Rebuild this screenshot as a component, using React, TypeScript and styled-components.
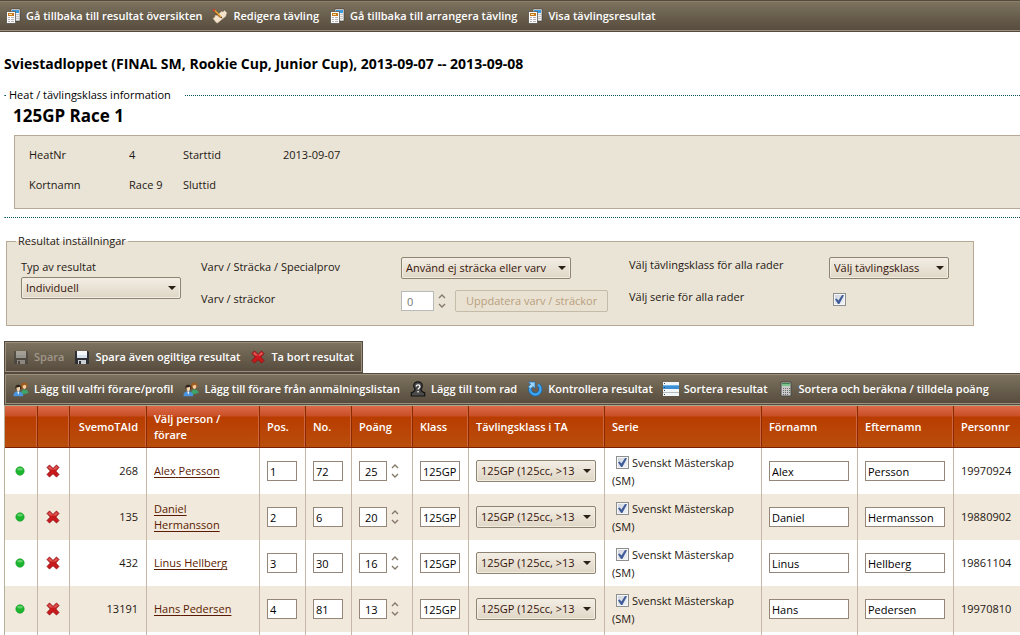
import React from "react";
import styled, { createGlobalStyle, css } from "styled-components";

const GlobalStyle = createGlobalStyle`
  *, *::before, *::after { box-sizing: border-box; }
  body {
    margin: 0;
    background: #fff;
    color: #1e1812;
    font-family: "Segoe UI", "Open Sans", "Noto Sans", sans-serif;
    font-size: 11px;
    line-height: 16px;
  }
  input, select, button { font: inherit; color: inherit; margin: 0; }
`;

const Page = styled.main`
  overflow: hidden;
`;

/* ---------- toolbars ---------- */

const Toolbar = styled.div<{ $compact?: boolean }>`
  display: flex;
  align-items: center;
  height: 32px;
  gap: 10px;
  padding: 0 8px;
  background: linear-gradient(#7d735f, #564b3d);
  border: 1px solid #544a3d;
  box-shadow: inset 0 0 0 1px #9a907d;
  ${(p) => p.$compact && css`width: max-content;`}
`;

const TopToolbar = styled(Toolbar)`
  padding: 0 5px;
  border-width: 1px 0;
  box-shadow: inset 0 -1px 0 #9a907d, inset 0 1px 0 #8b806c;
`;

const ToolButton = styled.button`
  display: flex;
  align-items: center;
  gap: 5px;
  padding: 0;
  border: 0;
  background: none;
  color: #fff;
  font-weight: 600;
  white-space: nowrap;
  &:disabled { color: #a0978a; }
  &:disabled svg { opacity: 0.4; }
`;

const ToolLink = styled.a`
  display: flex;
  align-items: center;
  gap: 5px;
  color: #fff;
  font-weight: 600;
  white-space: nowrap;
  text-decoration: none;
`;

/* ---------- heat information ---------- */

const Title = styled.h1`
  margin: 23px 4px 14px;
  font-size: 14px;
  line-height: 18px;
  font-weight: 700;
  color: #000;
`;

const HeatInfo = styled.fieldset`
  min-width: 0;
  margin: 0 0 0 4px;
  padding: 0 0 8px;
  border: 1px dotted #005060;
  border-width: 1px 0 1px 1px;
  border-left-color: transparent;
  legend {
    margin-left: 2px;
    padding: 0 14px 0 2px;
    color: #000;
  }
`;

const HeatTitle = styled.h2`
  margin: 0 0 6px 8px;
  font-size: 17px;
  line-height: 26px;
  font-weight: 700;
  color: #000;
`;

const InfoBox = styled.dl`
  display: grid;
  grid-template-columns: 100px 54px 100px 1fr;
  row-gap: 14px;
  margin: 0 0 0 9px;
  padding: 11px 14px 15px;
  border: 1px solid #b8a996;
  border-right: 0;
  background: #eae4d7;
  dt, dd { margin: 0; }
`;

/* ---------- result settings ---------- */

const Settings = styled.fieldset`
  display: grid;
  grid-template-columns: 180px 200px 228px 200px 1fr;
  margin: 15px 46px 15px 6px;
  padding: 8px 14px 13px;
  border: 1px solid #b8a996;
  background: #eae4d7;
  legend {
    margin-left: -5px;
    padding: 0 2px;
  }
`;

const SettingsColumn = styled.div<{ $gap?: number; $top?: number }>`
  display: flex;
  flex-direction: column;
  align-items: flex-start;
  gap: ${(p) => p.$gap ?? 0}px;
  padding-top: ${(p) => p.$top ?? 0}px;
  white-space: nowrap;
`;

const Inline = styled.div`
  display: flex;
  align-items: center;
`;

const UpdateButton = styled.button`
  height: 22px;
  margin-left: 9px;
  padding: 0 10px;
  border: 1px solid #c5bba9;
  border-radius: 2px;
  background: #e9e2d3;
  &:disabled { color: #b8a07c; }
`;

/* ---------- form parts ---------- */

const SelectFrame = styled.span<{ $width: number }>`
  position: relative;
  display: block;
  width: ${(p) => p.$width}px;
  height: 22px;
  svg {
    position: absolute;
    top: 9px;
    right: 5px;
    pointer-events: none;
  }
`;

const Select = styled.select`
  appearance: none;
  display: block;
  width: 100%;
  height: 22px;
  padding: 0 20px 0 4px;
  border: 1px solid #8f8371;
  border-radius: 2px;
  background: linear-gradient(#f3eee5, #e9e2d5 50%, #dfd6c5);
  box-shadow: inset 0 0 0 1px #f3eee4;
  color: #35140a;
`;

const TextInput = styled.input<{ $width: number }>`
  display: block;
  width: ${(p) => p.$width}px;
  height: 20px;
  padding: 1px 2px 0;
  border: 1px solid #94877a;
  background: #fff;
  color: #000;
  &:disabled { border-color: #b9b9b9; color: #777; }
`;

const SpinnerFrame = styled.span`
  display: flex;
  align-items: center;
  gap: 4px;
  input { padding-left: 5px; }
`;

const SpinnerButtons = styled.span`
  display: flex;
  flex-direction: column;
  gap: 4px;
`;

const SpinnerButton = styled.button`
  display: flex;
  padding: 0;
  border: 0;
  background: none;
`;

const Checkbox = styled.input`
  appearance: none;
  position: relative;
  width: 13px;
  height: 13px;
  border: 1px solid #8e8f8f;
  background: linear-gradient(135deg, #ccd2dc, #f4f6f8);
  box-shadow: inset 0 0 0 1px #f6f6f6;
  vertical-align: -2px;
  &:checked::before {
    content: "";
    position: absolute;
    inset: 1px;
    background: #3f5c98;
    clip-path: polygon(0% 48%, 18% 40%, 38% 62%, 78% 0%, 100% 4%, 48% 100%, 34% 100%);
  }
`;

function DropDown({ label, value, width }: { label: string; value: string; width: number }) {
  return (
    <SelectFrame $width={width}>
      <Select aria-label={label} defaultValue={value}>
        <option>{value}</option>
      </Select>
      <svg width="8" height="4" viewBox="0 0 8 4" aria-hidden="true">
        <path d="M0 0h8L4 4z" fill="#2b2015" />
      </svg>
    </SelectFrame>
  );
}

function Spinner({ label, value, width, disabled }: { label: string; value: string; width: number; disabled?: boolean }) {
  return (
    <SpinnerFrame>
      <TextInput $width={width} aria-label={label} defaultValue={value} disabled={disabled} />
      <SpinnerButtons>
        <SpinnerButton type="button" aria-label="Öka" disabled={disabled}>
          <svg width="8" height="6" viewBox="0 0 8 6"><path d="M1 5l3-3 3 3" fill="none" stroke="#85796a" strokeWidth="1.4" /></svg>
        </SpinnerButton>
        <SpinnerButton type="button" aria-label="Minska" disabled={disabled}>
          <svg width="8" height="6" viewBox="0 0 8 6"><path d="M1 1l3 3 3-3" fill="none" stroke="#85796a" strokeWidth="1.4" /></svg>
        </SpinnerButton>
      </SpinnerButtons>
    </SpinnerFrame>
  );
}

/* ---------- icons ---------- */

const Icon = ({ children }: { children: React.ReactNode }) => (
  <svg width="16" height="16" viewBox="0 0 16 16" aria-hidden="true">{children}</svg>
);

const PagesIcon = () => (
  <Icon>
    <path d="M6 1h9v12H6z" fill="#f3f3f3" stroke="#3c3a36" strokeWidth=".6" />
    <path d="M7 2h7v3H7z" fill="#3b9be0" />
    <path d="M11 6h3v1h-3zM11 8h3v1h-3zM11 10h3v1h-3z" fill="#c4c4c4" />
    <path d="M1.500 3.500h9v12h-9z" fill="#fafafa" stroke="#45423c" strokeWidth=".7" />
    <path d="M3 5h6v3H3z" fill="#c77a1e" />
    <path d="M4 6h3v1H4z" fill="#fbe3a8" />
    <path d="M3 9h2v1H3zM6 9h3v1H6zM3 11h2v1H3zM6 11h3v1H6zM3 13h2v1H3zM6 13h3v1H6z" fill="#b4b4b4" />
  </Icon>
);

const EditIcon = () => (
  <Icon>
    <path d="M1 10.500L3 9l0-1.500L5 7.500 9.500 3.500 11 4l1.500-1.500L15 5l-1 1.500 0 1.500-8.500 7L4 14.500 3 13z" fill="#f3e3cd" stroke="#cdb292" strokeWidth=".5" />
    <path d="M2.400 1L9.600 8.400 8.400 9.600 1 2.400z" fill="#e2a52f" />
    <path d="M1.200 2.600L8.400 9.800" stroke="#7d3415" strokeWidth=".9" />
    <path d="M.600 1.600L1.800.500 3.400 2 2 3.400z" fill="#c8392f" />
    <path d="M8.400 9.600L9.600 8.400l.7 2z" fill="#3c2a1a" />
  </Icon>
);

const SaveIcon = () => (
  <Icon>
    <path d="M1 2h13l1 1v12H1z" fill="#2e3033" />
    <path d="M3 2h10v7H3z" fill="#f4f7fa" />
    <path d="M3 6h10v3H3z" fill="#d8e2ec" />
    <path d="M4 11h8v4H4z" fill="#c9ced4" />
    <path d="M5 12h2v3H5z" fill="#2e3033" />
  </Icon>
);

const CrossIcon = () => (
  <Icon>
    <path d="M2 4.500L4.500 2 8 5.400 11.500 2 14 4.500 10.800 8 14 11.500 11.500 14 8 10.700 4.500 14 2 11.500 5.300 8z" fill="#c9191c" stroke="#8e0d10" strokeWidth=".8" strokeLinejoin="round" />
    <path d="M3 4.500L4.600 3 8 6.300 11.500 3 13 4.500 11 6.600H5z" fill="#e8706a" opacity=".7" />
  </Icon>
);

const PeopleIcon = () => (
  <Icon>
    <path d="M8 14c0-4 1-5.500 3.500-5.500S15.500 10 15.500 12z" fill="#3fa267" />
    <circle cx="11.300" cy="4.600" r="3.100" fill="#9c5a1d" />
    <path d="M9.600 4.600c1.500 0 2-.6 2.400-1.100.4.800 1 1.200 1.300 1.300 0 2-.8 3.200-1.800 3.200s-1.900-1.400-1.900-3.400z" fill="#f6cfa4" />
    <path d="M8.400 3L7.600 7.500 9.400 8z" fill="#8a4c17" />
    <path d="M.500 15.200c0-3.200 1-4.700 4.500-4.700s5.200 1.500 5.200 4.700z" fill="#4a94dd" />
    <path d="M4.300 10.500h2l-1 3.500z" fill="#fff" />
    <circle cx="5.200" cy="6.500" r="2.800" fill="#2e2118" />
    <path d="M3.400 6.500c1.600 0 2.600-.4 3.600-.8.400 2.800-.5 4.600-1.700 4.600s-1.900-1.800-1.900-3.800z" fill="#f8d8b2" />
  </Icon>
);

const PawnIcon = () => (
  <Icon>
    <path d="M8 .800c2.600 0 4.300 1.700 4.300 4 0 1.500-.6 2.500-1.500 3.300.2 1.700 1 2.900 3.900 3.700v3.200H1.300v-3.200c2.900-.8 3.700-2 3.900-3.700-.9-.8-1.500-1.800-1.500-3.300 0-2.300 1.700-4 4.300-4z" fill="#4b4b4b" stroke="#151515" strokeWidth="1.200" />
    <path d="M6.300 5.500c0-2.200 3.600-2 3.600 0 0 1.400-1.800 1.400-1.800 3M8.100 10v1.500" fill="none" stroke="#fff" strokeWidth="1.300" />
  </Icon>
);

const RefreshIcon = () => (
  <Icon>
    <path d="M11 3.800A5.200 5.200 0 1 1 3.200 7" fill="none" stroke="#1765b0" strokeWidth="3.800" />
    <path d="M11 3.800A5.200 5.200 0 1 1 3.200 7" fill="none" stroke="#3da5ef" strokeWidth="2.400" />
    <path d="M1.500 1h6.500v6.500L5.900 5.600 3.500 8 1.200 5.800 3.600 3.400z" fill="#9bd6fb" stroke="#1c6db8" strokeWidth=".7" />
  </Icon>
);

const ListIcon = () => (
  <Icon>
    <path d="M0 1h16v14H0z" fill="#f3f6f8" />
    <path d="M0 4h16v4H0z" fill="#3c8fd2" />
    <path d="M0 4h16v1H0z" fill="#6bb3e8" />
    <path d="M0 11h16v1H0z" fill="#b4bac0" />
    <path d="M1 2h1v1H1zM1 6h1v1H1zM1 9h1v1H1zM1 13h1v1H1z" fill="#30465e" />
  </Icon>
);

const CalculatorIcon = () => (
  <Icon>
    <path d="M3 1h10v14H3z" fill="#c9c9c9" stroke="#4a4a46" />
    <path d="M4 2h8v3H4z" fill="#7cc58a" />
    <path d="M4 2h8v1H4z" fill="#3f8550" />
    <path d="M5 7h1v1H5zM7 7h1v1H7zM9 7h1v1H9zM5 9h1v1H5zM7 9h1v1H7zM9 9h1v1H9zM5 11h1v1H5zM7 11h1v1H7zM9 11h1v1H9zM11 7h1v1h-1zM11 9h1v1h-1zM11 11h1v1h-1zM5 13h1v1H5zM7 13h1v1H7zM9 13h1v1H9z" fill="#6d6d6d" />
  </Icon>
);

const DotIcon = () => (
  <Icon>
    <circle cx="8" cy="8" r="4.200" fill="#1bb52e" stroke="#139a25" strokeWidth=".6" />
    <ellipse cx="8" cy="6.200" rx="2.800" ry="1.400" fill="#5fd069" />
  </Icon>
);

/* ---------- result table ---------- */

const ResultArea = styled.section`
  margin-left: 4px;
`;

const MainToolbar = styled(Toolbar)`
  margin-right: -4px;
`;

const ResultTable = styled.table`
  table-layout: fixed;
  width: 100%;
  min-width: 1016px;
  border-collapse: separate;
  border-spacing: 0;
  border-left: 1px solid #b8b09a;
  border-top: 1px solid #a9ab90;
`;

const HeadCell = styled.th<{ $right?: boolean }>`
  height: 42px;
  padding: 0 8px 0 7px;
  border-right: 1px solid #8a2a00;
  border-bottom: 1px solid #7c1f00;
  box-shadow: inset -1px 0 0 #d0653c;
  background: linear-gradient(#dc6a4b 0, #c94f25 10px, #b93c00 11px, #b94e0c 40px);
  color: #fff;
  font-weight: 600;
  text-align: ${(p) => (p.$right ? "right" : "left")};
  &:last-child { border-right: 0; box-shadow: none; white-space: nowrap; }
`;

const Row = styled.tr`
  &:nth-child(even) { background: #f1e9dc; }
`;

const Cell = styled.td<{ $align?: "right" }>`
  height: 46px;
  padding: 0 8px 0 7px;
  border-right: 1px solid #c6b8a8;
  text-align: ${(p) => p.$align ?? "left"};
  &:last-child { border-right: 0; }
`;

const SpareCell = styled(Cell)`
  height: 3px;
`;

const IconButton = styled.button`
  display: flex;
  padding: 0;
  border: 0;
  background: none;
`;

const PersonLink = styled.a`
  color: #5a1a00;
  text-decoration: underline;
  text-underline-offset: 2px;
`;

const SeriesLabel = styled.label`
  display: block;
  padding-top: 2px;
  line-height: 18px;
  input { margin: 0 3px 0 4px; }
`;

const columns: { title: string; width?: number; right?: boolean }[] = [
  { title: "", width: 33 },
  { title: "", width: 32 },
  { title: "SvemoTAId", width: 77, right: true },
  { title: "Välj person / förare", width: 113 },
  { title: "Pos.", width: 46 },
  { title: "No.", width: 46 },
  { title: "Poäng", width: 61 },
  { title: "Klass", width: 56 },
  { title: "Tävlingsklass i TA", width: 136 },
  { title: "Serie", width: 157 },
  { title: "Förnamn", width: 96 },
  { title: "Efternamn", width: 96 },
  { title: "Personnr" },
];

const results = [
  { id: "268", first: "Alex", last: "Persson", no: "72", points: "25", born: "19970924" },
  { id: "135", first: "Daniel", last: "Hermansson", no: "6", points: "20", born: "19880902" },
  { id: "432", first: "Linus", last: "Hellberg", no: "30", points: "16", born: "19861104" },
  { id: "13191", first: "Hans", last: "Pedersen", no: "81", points: "13", born: "19970810" },
];

export default function App() {
  return (
    <Page>
      <GlobalStyle />
      <TopToolbar as="nav">
        <ToolLink href="#oversikt"><PagesIcon />Gå tillbaka till resultat översikten</ToolLink>
        <ToolLink href="#redigera"><EditIcon />Redigera tävling</ToolLink>
        <ToolLink href="#arrangera"><PagesIcon />Gå tillbaka till arrangera tävling</ToolLink>
        <ToolLink href="#resultat"><PagesIcon />Visa tävlingsresultat</ToolLink>
      </TopToolbar>

      <Title>Sviestadloppet (FINAL SM, Rookie Cup, Junior Cup), 2013-09-07 -- 2013-09-08</Title>

      <HeatInfo>
        <legend>Heat / tävlingsklass information</legend>
        <HeatTitle>125GP Race 1</HeatTitle>
        <InfoBox>
          <dt>HeatNr</dt>
          <dd>4</dd>
          <dt>Starttid</dt>
          <dd>2013-09-07</dd>
          <dt>Kortnamn</dt>
          <dd>Race 9</dd>
          <dt>Sluttid</dt>
          <dd />
        </InfoBox>
      </HeatInfo>

      <Settings>
        <legend>Resultat inställningar</legend>
        <SettingsColumn $gap={2} $top={2}>
          <span>Typ av resultat</span>
          <DropDown label="Typ av resultat" value="Individuell" width={160} />
        </SettingsColumn>
        <SettingsColumn $gap={16} $top={2}>
          <span>Varv / Sträcka / Specialprov</span>
          <span>Varv / sträckor</span>
        </SettingsColumn>
        <SettingsColumn $gap={11}>
          <DropDown label="Varv / Sträcka / Specialprov" value="Använd ej sträcka eller varv" width={170} />
          <Inline>
            <Spinner label="Varv / sträckor" value="0" width={33} disabled />
            <UpdateButton type="button" disabled>Uppdatera varv / sträckor</UpdateButton>
          </Inline>
        </SettingsColumn>
        <SettingsColumn $gap={16}>
          <span>Välj tävlingsklass för alla rader</span>
          <label htmlFor="all-series">Välj serie för alla rader</label>
        </SettingsColumn>
        <SettingsColumn $gap={10}>
          <DropDown label="Välj tävlingsklass för alla rader" value="Välj tävlingsklass" width={120} />
          <Inline>
            <SeriesLabel as="span"><Checkbox type="checkbox" id="all-series" defaultChecked /></SeriesLabel>
          </Inline>
        </SettingsColumn>
      </Settings>

      <ResultArea>
        <Toolbar $compact>
          <ToolButton type="button" disabled><SaveIcon />Spara</ToolButton>
          <ToolButton type="button"><SaveIcon />Spara även ogiltiga resultat</ToolButton>
          <ToolButton type="button"><CrossIcon />Ta bort resultat</ToolButton>
        </Toolbar>
        <MainToolbar>
          <ToolButton type="button"><PeopleIcon />Lägg till valfri förare/profil</ToolButton>
          <ToolButton type="button"><PeopleIcon />Lägg till förare från anmälningslistan</ToolButton>
          <ToolButton type="button"><PawnIcon />Lägg till tom rad</ToolButton>
          <ToolButton type="button"><RefreshIcon />Kontrollera resultat</ToolButton>
          <ToolButton type="button"><ListIcon />Sortera resultat</ToolButton>
          <ToolButton type="button"><CalculatorIcon />Sortera och beräkna / tilldela poäng</ToolButton>
        </MainToolbar>
        <ResultTable>
          <colgroup>
            {columns.map((c, i) => <col key={i} width={c.width} />)}
          </colgroup>
          <thead>
            <tr>
              {columns.map((c, i) => <HeadCell key={i} $right={c.right}>{c.title}</HeadCell>)}
            </tr>
          </thead>
          <tbody>
            {results.map((r, i) => (
              <Row key={r.id}>
                <Cell><IconButton type="button" aria-label="Status"><DotIcon /></IconButton></Cell>
                <Cell><IconButton type="button" aria-label="Ta bort"><CrossIcon /></IconButton></Cell>
                <Cell $align="right">{r.id}</Cell>
                <Cell><PersonLink href="#person">{r.first} {r.last}</PersonLink></Cell>
                <Cell><TextInput $width={30} aria-label="Pos." defaultValue={String(i + 1)} /></Cell>
                <Cell><TextInput $width={30} aria-label="No." defaultValue={r.no} /></Cell>
                <Cell><Spinner label="Poäng" value={r.points} width={28} /></Cell>
                <Cell><TextInput $width={40} aria-label="Klass" defaultValue="125GP" /></Cell>
                <Cell><DropDown label="Tävlingsklass i TA" value="125GP (125cc, >13 år)" width={120} /></Cell>
                <Cell>
                  <SeriesLabel><Checkbox type="checkbox" defaultChecked />Svenskt Mästerskap (SM)</SeriesLabel>
                </Cell>
                <Cell><TextInput $width={80} aria-label="Förnamn" defaultValue={r.first} /></Cell>
                <Cell><TextInput $width={80} aria-label="Efternamn" defaultValue={r.last} /></Cell>
                <Cell>{r.born}</Cell>
              </Row>
            ))}
            <Row>
              {columns.map((_, i) => <SpareCell key={i} />)}
            </Row>
          </tbody>
        </ResultTable>
      </ResultArea>
    </Page>
  );
}
